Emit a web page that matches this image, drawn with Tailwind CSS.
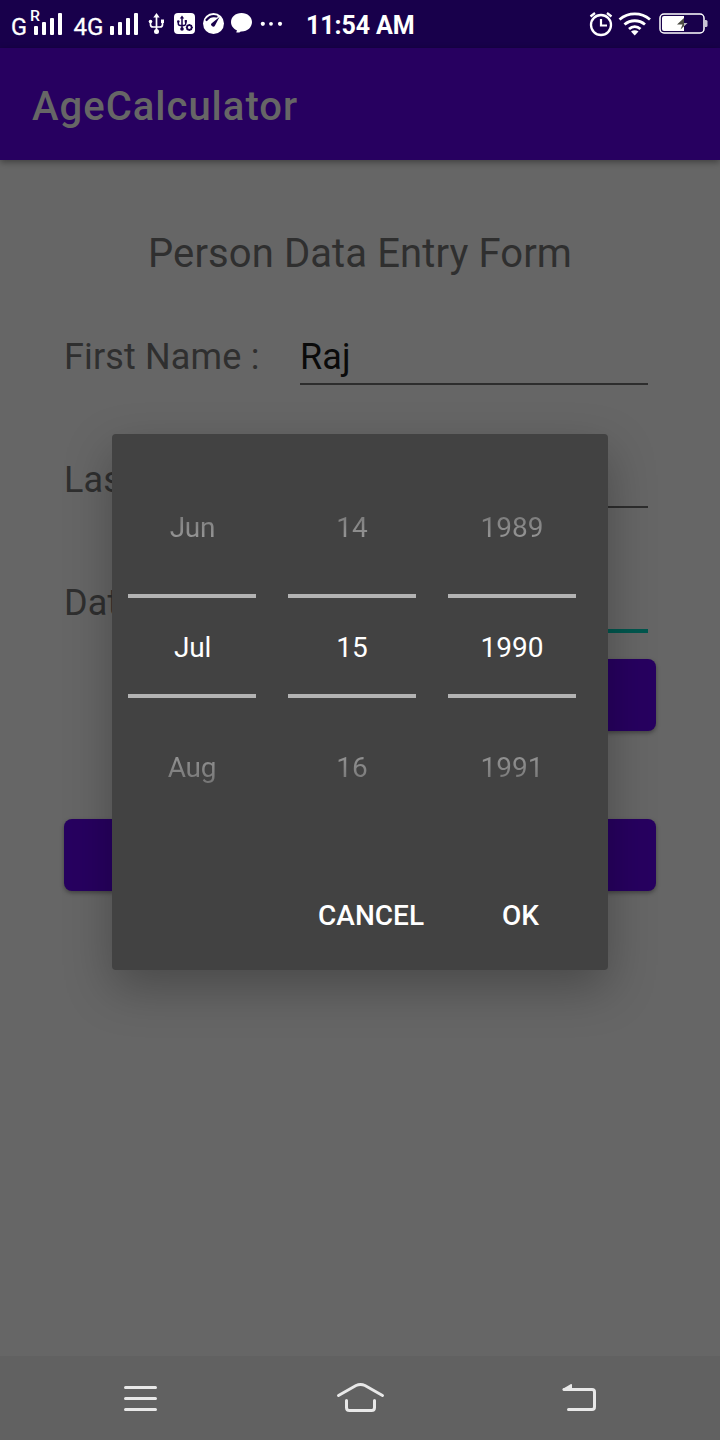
<!DOCTYPE html>
<html lang="en">
<head>
<meta charset="utf-8">
<title>AgeCalculator</title>
<script src="https://cdn.jsdelivr.net/npm/@tailwindcss/browser@4"></script>
</head>
<body class="relative flex h-[1440px] w-[720px] flex-col overflow-hidden bg-[#666666] font-['Roboto',sans-serif]">
  <!-- Status bar -->
  <div class="flex h-12 shrink-0 items-center bg-[#18004b] text-white">
    <svg class="h-12 w-[146px] shrink-0" viewBox="0 0 146 48" fill="currentColor">
      <text x="11" y="34.500" font-size="23" textLength="16" lengthAdjust="spacingAndGlyphs" stroke="currentColor" stroke-width=".3">G</text>
      <text x="30" y="21" font-size="14" font-weight="500" textLength="10" lengthAdjust="spacingAndGlyphs">R</text>
      <rect x="34" y="26" width="4" height="9" rx="1"/><rect x="42" y="22" width="4" height="13" rx="1"/><rect x="50" y="18" width="4" height="17" rx="1"/><rect x="58" y="13" width="4" height="22" rx="1"/>
      <text x="73.500" y="34.500" font-size="23" textLength="30" lengthAdjust="spacingAndGlyphs" stroke="currentColor" stroke-width=".3">4G</text>
      <rect x="110" y="26" width="4" height="9" rx="1"/><rect x="118" y="22" width="4" height="13" rx="1"/><rect x="126" y="18" width="4" height="17" rx="1"/><rect x="134" y="13" width="4" height="22" rx="1"/>
    </svg>
    <svg class="h-12 w-[144px] shrink-0" viewBox="146 0 144 48" fill="currentColor">
      <path d="M156.500 13l3.200 4.500h-6.400z"/><circle cx="156.500" cy="31.500" r="2.500"/><circle cx="150.500" cy="21.500" r="1.800"/><path d="M161 19.500h3v3.500h-3z"/>
      <path d="M156.500 16v15M150.500 22v2.500q0 2.500 2.500 2.500h7q2.500 0 2.500-2.500v-3" fill="none" stroke="currentColor" stroke-width="1.700"/>
      <rect x="174" y="13" width="21" height="21" rx="4"/>
      <g fill="#18004b">
        <path d="M182 15.500l2.200 3h-4.400z"/><circle cx="182" cy="29" r="1.800"/><circle cx="178.300" cy="21.500" r="1.300"/><path d="M184.700 20h2.200v2.500h-2.200z"/>
        <path d="M182 17v12M178.300 22v1.500q0 2 2 2h3.500q2 0 2-2v-2" fill="none" stroke="#18004b" stroke-width="1.500"/>
        <circle cx="189.300" cy="27.500" r="4" fill="#fff"/>
        <circle cx="189.300" cy="27.500" r="2.400" fill="none" stroke="#18004b" stroke-width="1.700"/>
        <path d="M189.300 24v7M185.800 27.500h7M186.800 25l5 5M191.800 25l-5 5" fill="none" stroke="#18004b" stroke-width="1"/><circle cx="189.300" cy="27.500" r="1.400" fill="#fff"/>
      </g>
      <circle cx="213.500" cy="23.500" r="10.500"/>
      <path d="M206.500 20q4-5 10-3.500" fill="none" stroke="#18004b" stroke-width="2.200" stroke-linecap="round"/>
      <path d="M219.500 17l-4.500 8.500a2 2 0 1 1-3-2.500z" fill="#18004b"/>
      <path d="M241.500 13c6.200 0 10.500 4 10.500 9s-4.300 9.500-10.500 9.500c-.8 0-1.400 0-2 1l-3.200 0 .6-2.200C233.500 28.700 231 26 231 22c0-5 4.300-9 10.500-9z"/>
      <circle cx="262.800" cy="23.800" r="2.100"/><circle cx="271" cy="23.800" r="1.900"/><circle cx="280" cy="23.800" r="2.100"/>
    </svg>
    <span class="ml-4 mt-[4px] w-[130px] whitespace-nowrap text-[25px] font-bold leading-[30px] tracking-[-0.1px]">11:54 AM</span>
    <svg class="ml-auto h-12 w-[140px] shrink-0" viewBox="580 0 140 48" fill="none" stroke="currentColor">
      <circle cx="601" cy="25" r="10" stroke-width="2.300"/>
      <path d="M601 19v6.500h6" stroke-width="2.200"/>
      <path d="M590.500 16.500l4.500-3.500M611.500 16.500l-4.500-3.500" stroke-width="2.300"/>
      <path d="M619.500 19.500c9-7.500 21.500-7.500 30.500 0M624.500 24.500c6-5 14.500-5 20.500 0M629 29c3.500-3 8-3 11.500 0" stroke-width="2.900"/>
      <path d="M631 31.500q3.800-2.500 7.500 0l-3.800 4z" fill="currentColor" stroke="none"/>
      <rect x="660" y="14" width="44" height="19" rx="4" stroke-width="1.500"/>
      <path d="M664 16h20v15h-20q-2 0-2-2V18q0-2 2-2z" fill="currentColor" stroke="none"/>
      <path d="M705 20h1q1.500 0 1.500 1.500v4q0 1.500-1.500 1.500h-1z" fill="#c9c4d5" stroke="none"/>
      <path d="M684 18v5h3.500l-7 6.500 2-5h-5.500z" fill="#4b4b42" stroke="none"/><path d="M684 18v5h3.500l-3.500 3.200z" fill="#bbb7c7" stroke="none"/>
    </svg>
  </div>

  <!-- App bar -->
  <header class="z-0 flex h-28 shrink-0 items-center bg-[#270060] pl-8 pt-[6px] shadow-[0_2px_7px_rgba(0,0,0,0.4)]">
    <h1 class="text-[40px] font-medium leading-[48px] tracking-[1px] text-[#666666]">AgeCalculator</h1>
  </header>

  <!-- Entry form -->
  <main class="flex grow flex-col px-16 pt-[70px] text-[36px] tracking-[0.15px] text-[#2f2f2f]">
    <h2 class="text-center text-[40px] leading-[48px] tracking-[0.1px]">Person Data Entry Form</h2>
    <div class="mt-[49px] flex h-[58px] justify-between pr-2">
      <label class="pt-[8px] leading-[44px]">First Name :</label>
      <div class="w-[348px] border-b-2 border-[#2d2d2d] pt-[8px] leading-[44px] text-[#0a0a0a]">Raj</div>
    </div>
    <div class="mt-[65px] flex h-[58px] justify-between pr-2">
      <label class="pt-[8px] leading-[44px]">Last Name :</label>
      <div class="w-[348px] border-b-2 border-[#2d2d2d]"></div>
    </div>
    <div class="mt-[65px] flex h-[60px] justify-between pr-2">
      <label class="pt-[8px] leading-[44px]">Date of Birth :</label>
      <div class="w-[348px] border-b-4 border-[#01574e]"></div>
    </div>
    <div class="-mr-2 ml-[232px] mt-[26px] h-[72px] w-[360px] rounded-lg bg-[#270060] shadow-[0_2px_4px_rgba(0,0,0,0.35)]"></div>
    <div class="mt-[88px] h-[72px] rounded-lg bg-[#270060] shadow-[0_2px_4px_rgba(0,0,0,0.35)]"></div>
  </main>

  <!-- Navigation bar -->
  <nav class="flex h-[84px] shrink-0 items-center justify-between bg-[#616161] pl-[120px] pr-[120px] text-[#e8e8e8]">
    <svg class="h-10 w-10" viewBox="120 1378 40 40" fill="none" stroke="currentColor" stroke-width="3" stroke-linecap="round"><path d="M125.500 1387.500h30M125.500 1398.500h30M125.500 1409.500h30"/></svg>
    <svg class="h-10 w-[50px]" viewBox="335 1378 50 40" fill="none" stroke="currentColor" stroke-width="3" stroke-linecap="round"><path d="M338.500 1395.500l17.500-10q4.500-2 9 0l17.500 10M346.500 1400.500v7q0 3 3 3h22q3 0 3-3v-7"/></svg>
    <svg class="h-10 w-10" viewBox="560 1378 40 40" fill="none" stroke="currentColor" stroke-width="3" stroke-linecap="round"><path d="M564 1389.500h28q2.500 0 2.500 2.500v15q0 2.500-2.500 2.500h-23.500"/><path d="M562.500 1389l8.500-5q1-.3 1 1v5h-9z" fill="currentColor" stroke="none"/></svg>
  </nav>

  <!-- Date picker dialog -->
  <section class="absolute left-[112px] top-[434px] z-10 flex h-[536px] w-[496px] flex-col rounded-[4px] bg-[#424242] text-white shadow-[0_18px_48px_rgba(0,0,0,0.28)]">
    <div class="flex gap-8 pl-4 pt-[70px] text-center text-[28px] leading-[48px]">
      <div class="w-32">
        <div class="mb-[42px] h-12 bg-linear-to-b from-[#707070] to-[#a5a5a5] bg-clip-text pl-px tracking-[-0.2px] text-transparent">Jun</div>
        <div class="h-[104px] border-y-4 border-[#b3b3b3] pl-px pt-[26px] tracking-[-0.2px]">Jul</div>
        <div class="mt-[46px] h-12 bg-linear-to-b from-[#a0a0a0] to-[#6c6c6c] bg-clip-text tracking-[-0.2px] text-transparent">Aug</div>
      </div>
      <div class="w-32">
        <div class="mb-[42px] h-12 bg-linear-to-b from-[#707070] to-[#a5a5a5] bg-clip-text text-transparent">14</div>
        <div class="h-[104px] border-y-4 border-[#b3b3b3] pt-[26px]">15</div>
        <div class="mt-[46px] h-12 bg-linear-to-b from-[#a0a0a0] to-[#6c6c6c] bg-clip-text text-transparent">16</div>
      </div>
      <div class="w-32">
        <div class="mb-[42px] h-12 bg-linear-to-b from-[#707070] to-[#a5a5a5] bg-clip-text text-transparent">1989</div>
        <div class="h-[104px] border-y-4 border-[#b3b3b3] pt-[26px]">1990</div>
        <div class="mt-[46px] h-12 bg-linear-to-b from-[#a0a0a0] to-[#6c6c6c] bg-clip-text text-transparent">1991</div>
      </div>
    </div>
    <div class="mt-auto flex justify-end gap-[78px] pb-[30px] pr-[69px] text-[28px] font-medium leading-[48px]">
      <button>CANCEL</button>
      <button>OK</button>
    </div>
  </section>
</body>
</html>
